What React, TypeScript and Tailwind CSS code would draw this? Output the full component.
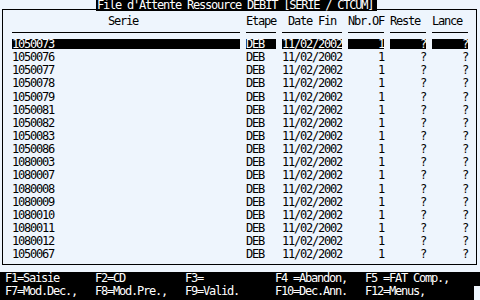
import React from "react";

const series = [
  "1050073",
  "1050076",
  "1050077",
  "1050078",
  "1050079",
  "1050081",
  "1050082",
  "1050083",
  "1050086",
  "1080003",
  "1080007",
  "1080008",
  "1080009",
  "1080010",
  "1080011",
  "1080012",
  "1050067",
];

const cols = "grid grid-cols-[228px_30px_60px_36px_36px_36px] gap-x-[6px] pl-[9px]";

const touches1 = ["F1=Saisie", "F2=CD", "F3=", "F4 =Abandon,", "F5 =FAT Comp.,"];
const touches2 = ["F7=Mod.Dec.,", "F8=Mod.Pre.,", "F9=Valid.", "F10=Dec.Ann.", "F12=Menus,"];

function Ligne({ serie, actif }: { serie: string; actif: boolean }) {
  const cell = actif ? "bg-black text-white" : "";
  return (
    <div className={`${cols} h-[13.15px] shrink-0`}>
      <div className={`h-[10px] leading-[10px] ${cell}`}>{serie}</div>
      <div className={`h-[10px] leading-[10px] ${cell}`}>DEB</div>
      <div className={`h-[10px] leading-[10px] ${cell}`}>11/02/2002</div>
      <div className={`h-[10px] leading-[10px] text-right ${cell}`}>1</div>
      <div className={`h-[10px] leading-[10px] text-right ${cell}`}>?</div>
      <div className={`h-[10px] leading-[10px] text-right ${cell}`}>?</div>
    </div>
  );
}

export default function App() {
  return (
    <div
      className="w-[480px] h-[300px] flex flex-col bg-[#eef5fd] text-black text-[12px] tracking-[-1.22px] whitespace-pre overflow-hidden"
      style={{ fontFamily: '"DejaVu Sans Mono", "Liberation Mono", monospace' }}
    >
      {/* titre */}
      <div className="flex h-[11px] shrink-0">
        <div className="ml-[2px] w-[94px] mt-[9px] border-t border-l border-black" />
        <div className="w-[281px] h-[11px] bg-black text-white pl-[1px] leading-[11px]">
          File d'Attente Ressource DEBIT [SERIE / CTCUM]
        </div>
        <div className="w-[100px] mt-[9px] border-t border-r border-black" />
      </div>

      {/* liste */}
      <div className="ml-[2px] w-[475px] h-[254px] shrink-0 flex flex-col border-l border-r border-b border-black">
        <div className={`${cols} mt-[5px] h-[10px] leading-[10px] shrink-0`}>
          <div className="pl-[96px]">Serie</div>
          <div>Etape</div>
          <div className="pl-[6px]">Date Fin</div>
          <div>Nbr.OF</div>
          <div>Reste</div>
          <div>Lance</div>
        </div>
        <div className={`${cols} mt-[6px] h-[1px] shrink-0`}>
          <div className="bg-black" />
          <div className="bg-black" />
          <div className="bg-black" />
          <div className="bg-black" />
          <div className="bg-black" />
          <div className="bg-black" />
        </div>
        <div className="mt-[6px] flex flex-col">
          {series.map((s, i) => (
            <Ligne key={s} serie={s} actif={i === 0} />
          ))}
        </div>
      </div>

      <div className="flex-1" />

      {/* touches de fonction */}
      <div className="h-[28px] shrink-0 flex flex-col bg-black text-white">
        <div className="h-[13px] leading-[12px] pl-[5px] grid grid-cols-[90px_90px_90px_90px_90px]">
          {touches1.map((t) => (
            <div key={t}>{t}</div>
          ))}
        </div>
        <div className="flex h-[15px]">
          <div className="w-[474px] leading-[12px] pl-[5px] grid grid-cols-[90px_90px_90px_90px_90px] content-start">
            {touches2.map((t) => (
              <div key={t}>{t}</div>
            ))}
          </div>
          <div className="w-[6px] mt-[1px] bg-[#eef5fd]" />
        </div>
      </div>
    </div>
  );
}
